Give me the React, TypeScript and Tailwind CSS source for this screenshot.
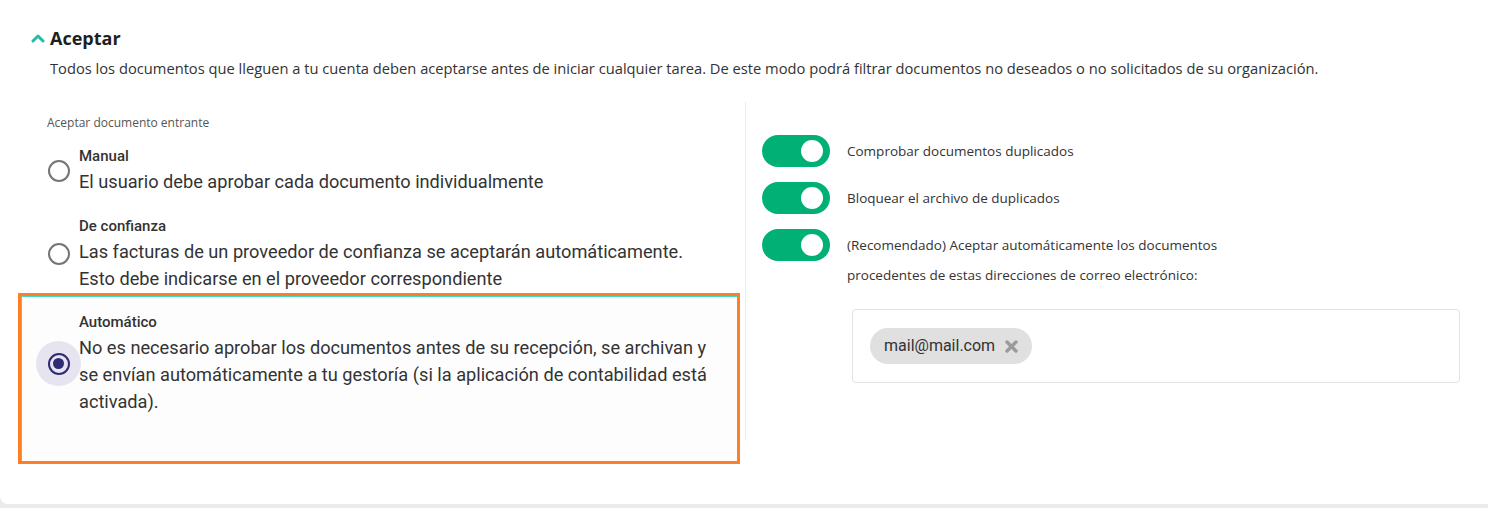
const options = [
  {
    title: "Manual",
    lines: ["El usuario debe aprobar cada documento individualmente"],
  },
  {
    title: "De confianza",
    lines: [
      "Las facturas de un proveedor de confianza se aceptarán automáticamente.",
      "Esto debe indicarse en el proveedor correspondiente",
    ],
  },
];

function Radio({ checked }: { checked?: boolean }) {
  if (checked) {
    return (
      <div className="w-[45px] h-[45px] rounded-full bg-[#e6e4ee] flex items-center justify-center shrink-0">
        <div className="w-[22px] h-[22px] rounded-full border-2 border-[#2e2a74] flex items-center justify-center">
          <div className="w-[11px] h-[11px] rounded-full bg-[#2e2a74]" />
        </div>
      </div>
    );
  }
  return (
    <div className="w-[45px] h-[45px] flex items-center justify-center shrink-0">
      <div className="w-[22px] h-[22px] rounded-full border-2 border-[#757575]" />
    </div>
  );
}

function Toggle() {
  return (
    <div className="w-[68px] h-[32px] rounded-full bg-[#00b074] flex items-center justify-end pr-[7px] shrink-0">
      <div className="w-[22px] h-[22px] rounded-full bg-white" />
    </div>
  );
}

export default function App() {
  return (
    <div className="h-[508px] bg-[#ebebeb] overflow-hidden">
      <div className="h-[504px] bg-white rounded-bl-lg font-['Open_Sans',sans-serif] text-[#333]">
        {/* header */}
        <div className="pt-[25px] pl-[31px] flex items-center gap-[5px]">
          <svg width="14" height="10" viewBox="0 0 14 10" className="mt-[-1px]">
            <path d="M2 8 L7 3 L12 8" fill="none" stroke="#1fbfa5" strokeWidth="3" strokeLinecap="round" strokeLinejoin="round" />
          </svg>
          <h2 className="text-[18px] leading-[26px] font-bold text-[#1f1f1f]">Aceptar</h2>
        </div>
        <p className="pl-[50px] mt-[6px] text-[14.7px] leading-[22px] text-[#333]">
          Todos los documentos que lleguen a tu cuenta deben aceptarse antes de iniciar cualquier tarea. De este modo podrá filtrar documentos no deseados o no solicitados de su organización.
        </p>

        <div className="flex mt-[23px] pl-[18px]">
          {/* left column */}
          <div className="w-[722px] pt-[13px]">
            <div className="pl-[29px] text-[12px] leading-[16px] text-[#555]">Aceptar documento entrante</div>
            <div className="mt-[15px] flex flex-col gap-[21px] font-['Roboto',sans-serif]">
              {options.map((o) => (
                <div key={o.title} className="flex items-center pl-[18px]">
                  <Radio />
                  <div className="-ml-[2px]">
                    <div className="text-[15px] leading-[20px] font-medium text-[#333]">{o.title}</div>
                    <div className="mt-[2px] text-[18.2px] leading-[27px] text-[#333]">
                      {o.lines.map((l) => (
                        <div key={l}>{l}</div>
                      ))}
                    </div>
                  </div>
                </div>
              ))}
            </div>
            <div className="mt-[1px] h-[171px] border-[3px] border-[#ff7f27] bg-[#fdfdfd] shadow-[inset_1px_1px_0_#3fd9c8] pt-[16px] pl-[15px] font-['Roboto',sans-serif]">
              <div className="flex items-center">
                <Radio checked />
                <div className="-ml-[2px] w-[636px]">
                  <div className="text-[15px] leading-[20px] font-medium text-[#333]">Automático</div>
                  <div className="mt-[2px] text-[18.2px] leading-[27px] text-[#333]">
                    No es necesario aprobar los documentos antes de su recepción, se archivan y se envían automáticamente a tu gestoría (si la aplicación de contabilidad está activada).
                  </div>
                </div>
              </div>
            </div>
          </div>

          {/* right column */}
          <div className="ml-[5px] self-start h-[338px] border-l border-[#ececec] pl-[16px] pt-[33px] flex-1">
            <div className="flex flex-col gap-[15px]">
              <div className="flex items-start gap-[17px]">
                <Toggle />
                <span className="text-[13.5px] leading-[30px] mt-[1px] text-[#333]">Comprobar documentos duplicados</span>
              </div>
              <div className="flex items-start gap-[17px]">
                <Toggle />
                <span className="text-[13.5px] leading-[30px] mt-[1px] text-[#333]">Bloquear el archivo de duplicados</span>
              </div>
              <div className="flex items-start gap-[17px]">
                <Toggle />
                <span className="text-[13.5px] leading-[30px] mt-[1px] text-[#333]">
                  (Recomendado) Aceptar automáticamente los documentos
                  <br />
                  procedentes de estas direcciones de correo electrónico:
                </span>
              </div>
            </div>
            <div className="ml-[90px] mt-[19px] w-[608px] h-[74px] border border-[#e3e3e3] rounded-[4px] pt-[18px] pl-[17px]">
              <div className="inline-flex items-center h-[36px] rounded-full bg-[#e0e0e0] pl-[14px] pr-[14px] gap-[10px] font-['Roboto',sans-serif]">
                <span className="text-[16px] text-[#333]">mail@mail.com</span>
                <svg width="13" height="13" viewBox="0 0 13 13">
                  <path d="M2 2 L11 11 M11 2 L2 11" stroke="#9a9a9a" strokeWidth="3.4" strokeLinecap="round" />
                </svg>
              </div>
            </div>
          </div>
        </div>
      </div>
    </div>
  );
}
